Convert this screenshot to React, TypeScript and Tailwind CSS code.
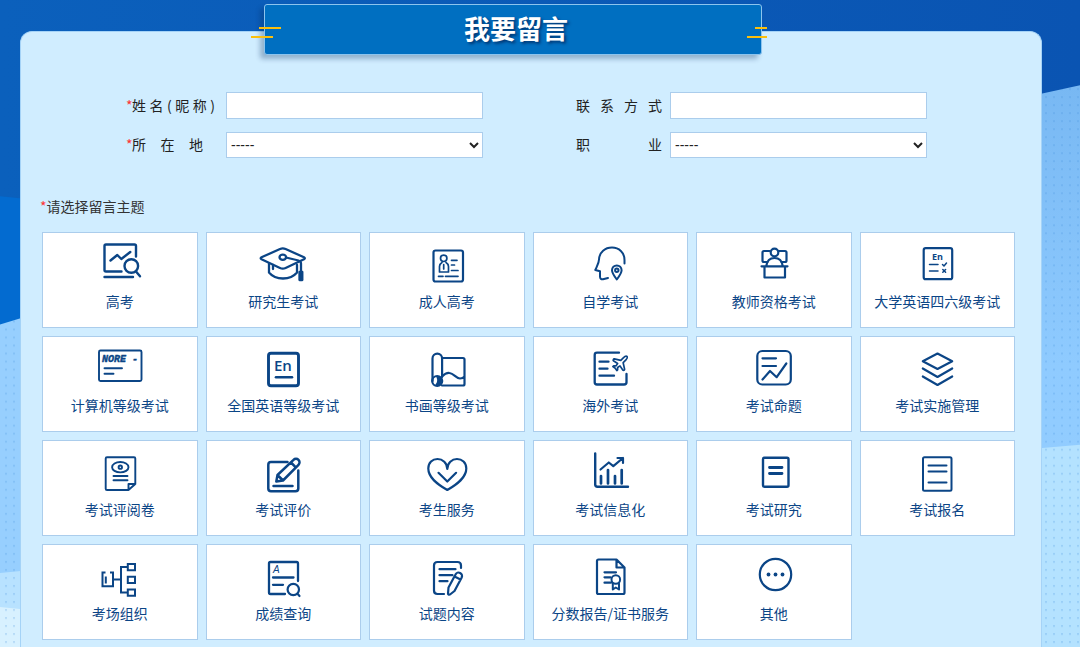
import React, { useState } from 'react';
import { Plane } from 'lucide-react';

type Topic = { label: string; icon: React.ReactNode };

const topics: Topic[] = [
  {
    label: '高考',
    icon: (
      <g strokeWidth="2.4">
        <path d="M40 16.5V6a1.5 1.5 0 0 0-1.5-1.5H10A1.5 1.5 0 0 0 8.500 6v24a1.5 1.5 0 0 0 1.5 1.5h15.5" />
        <path d="M8.500 37H37M14.500 20.500l6.800-5.500 4 4 9-7" />
        <circle cx="35.3" cy="26" r="6.800" />
        <path d="M40 31.500l4 4.800" />
      </g>
    ),
  },
  {
    label: '研究生考试',
    icon: (
      <g strokeWidth="2.3">
        <path d="M2.500 17.300 21 9q2.800-1.300 5.600 0L45 17.300q1.700 1 0 2L26.600 28q-2.800 1.300-5.600 0L2.500 19.300q-1.700-1 0-2Z" />
        <path d="M10 23.500V32.500q5 6 14 6t14-6V25M14 25v4" />
        <ellipse cx="23.800" cy="17.300" rx="3.300" ry="2.600" />
        <path d="M27 17.500 39.500 20.500q2.500.8 2.500 3V31" />
        <path d="M40.500 32h2.800v8h-2.800Z" fill="currentColor" />
      </g>
    ),
  },
  {
    label: '成人高考',
    icon: (
      <>
        <rect x="10.500" y="10.500" width="29.500" height="31" rx="2" />
        <g strokeWidth="1.700">
          <circle cx="20.700" cy="18.300" r="3.200" />
          <path d="M19 22.500q-2.500 1.500-2.500 4V32h9v-5.500q0-2.500-2.500-4M20.700 24.500v4.500M28.500 20.300H34M28.500 25H31.500M28.500 30.500H35M15.500 36.300H20M22.500 36.300H35" />
        </g>
      </>
    ),
  },
  {
    label: '自学考试',
    icon: (
      <g strokeWidth="2">
        <path d="M38.500 23.500V20C38.500 12.500 33 7.500 26 7.500C19 7.500 13.500 12 13 19.500C13 23 11 26 9.300 30L14 31.300V36.500Q14 39.500 17 39.300L22 38" />
        <path d="M30.800 39.500Q26 33 26 30.200a4.800 4.800 0 0 1 9.600 0Q35.600 33 30.800 39.500Z" />
        <circle cx="30.800" cy="30.200" r="1.700" />
      </g>
    ),
  },
  {
    label: '教师资格考试',
    icon: (
      <g strokeWidth="2.200">
        <path d="M19.500 11H14q-1.500 0-1.500 1.500v8q0 1.500 1.500 1.500h3.500M29 11h6q1.500 0 1.500 1.500v8q0 1.500-1.500 1.500h-3.500" />
        <circle cx="24.500" cy="12.500" r="3.800" />
        <path d="M16.300 26q1-8 8.200-8t8.200 8M11.500 26.300H37.500M14.500 26.500V37.500H35V26.500" />
      </g>
    ),
  },
  {
    label: '大学英语四六级考试',
    icon: (
      <>
        <rect x="10.700" y="8.200" width="28.500" height="31" rx="2" />
        <text x="19" y="19.500" className="font-['Open_Sans',sans-serif] text-[9px] font-bold" fill="currentColor" stroke="none">En</text>
        <path d="M16.500 24.500H25M16.500 31H25M29.500 24.500l1.500 1.500 2.500-3M29.800 29.500l2.800 2.800M32.600 29.500l-2.800 2.800" strokeWidth="1.500" />
      </>
    ),
  },
  {
    label: '计算机等级考试',
    icon: (
      <g strokeWidth="1.900">
        <rect x="3" y="6.500" width="42.500" height="30.500" rx="1.500" />
        <text x="6" y="17.500" className="font-['Liberation_Mono',monospace] text-[10px] font-bold italic" fill="currentColor" stroke="currentColor" strokeWidth="0.4" xmlSpace="preserve">NORE -</text>
        <path d="M8.500 24.300H26M8.500 29.700H17.500" />
      </g>
    ),
  },
  {
    label: '全国英语等级考试',
    icon: (
      <g strokeWidth="2.900">
        <rect x="9.500" y="9.300" width="30" height="32.500" rx="2.500" />
        <text x="15" y="27" className="font-['Open_Sans',sans-serif] text-[15px] font-semibold" fill="currentColor" stroke="none">En</text>
        <path d="M17 33.300H33" strokeWidth="2.600" />
      </g>
    ),
  },
  {
    label: '书画等级考试',
    icon: (
      <>
        <path d="M9.500 37V14.500a4.800 4.800 0 0 1 9.600 0V33" />
        <circle cx="14.200" cy="37" r="5" />
        <path d="M14.500 33a4 4 0 1 1-1 8q3-4 1-8Z" fill="currentColor" />
        <path d="M19.500 14H40q1.500 0 1.500 1.500V40q0 1.500-1.500 1.500H19M19 32.500Q23 28.500 26.500 29C31 29.500 33 34.500 37 34.500Q40 34.500 41.500 32.500" />
      </>
    ),
  },
  {
    label: '海外考试',
    icon: (
      <>
        <path d="M33 8.700H11Q8.700 8.700 8.700 11V38.200Q8.700 40.500 11 40.500H38Q40.500 40.500 40.500 38.200V30M13.500 17.700H22.500M13.500 24.700H21.500M13.500 31.700H28" strokeWidth="2.300" />
        <Plane x="24.500" y="10" width="19" height="19" strokeWidth={2.1} />
      </>
    ),
  },
  {
    label: '考试命题',
    icon: (
      <>
        <rect x="7.300" y="7" width="33.500" height="33.500" rx="5" />
        <path d="M12.500 14.300H26M12.500 22H26M12.500 35.500 20 27l6.700 6.200L36.300 19.500" />
      </>
    ),
  },
  {
    label: '考试实施管理',
    icon: <path d="M9.800 17.300 24.500 9.500l14.700 7.800L24.500 25ZM9.800 24.500 24.500 33l14.700-8.500M9.800 32.500 24.500 41l14.700-8.500" />,
  },
  {
    label: '考试评阅卷',
    icon: (
      <g strokeWidth="1.900">
        <path d="M32.500 42H11Q9.700 42 9.700 40.700V10.500Q9.700 9.200 11 9.200H38Q39.300 9.200 39.300 10.500V36ZM32.500 42V36H39.300" />
        <ellipse cx="24.300" cy="19.200" rx="8.200" ry="5.200" />
        <circle cx="24.300" cy="19.200" r="1.700" />
        <path d="M17.500 28H31.500M17.500 32.300H31.500" />
      </g>
    ),
  },
  {
    label: '考试评价',
    icon: (
      <g strokeWidth="2.500">
        <path d="M28.500 14H12Q9.300 14 9.300 16.700V40.500Q9.300 43.200 12 43.200H36.500Q39.300 43.200 39.300 40.500V22.500M14.500 38H33.500" />
        <path d="M17.300 33.500 18.500 27 34.500 11.800a3.500 3.500 0 0 1 5 5L24 32.500ZM18.500 27l5 5M32 14.500l4.800 4.800" />
      </g>
    ),
  },
  {
    label: '考生服务',
    icon: (
      <path d="M24.300 42C14 36 5.300 29.500 5.300 20.500C5.300 14.500 9.500 11 14.500 11C19.500 11 24.300 15 24.300 21C24.300 15 29 11 34 11C39 11 43.300 14.500 43.300 20.500C43.300 29.500 34.500 36 24.300 42ZM15.500 24.800l8.800 8.700 8.800-8.700" />
    ),
  },
  {
    label: '考试信息化',
    icon: (
      <>
        <path d="M9.200 5.500V36.500Q9.200 38.700 11.500 38.700H42" strokeWidth="2.400" />
        <path d="M15 28v7.500M22 22v13.500M29 28v7.500M35.700 22v13.500" strokeWidth="2.700" />
        <path d="M14.500 21.500 22.800 14.500l4.500 3.700L37 10M31.500 10H37V15" />
      </>
    ),
  },
  {
    label: '考试研究',
    icon: (
      <>
        <rect x="13" y="9.700" width="25.500" height="29" rx="1.500" strokeWidth="2.400" />
        <path d="M19.500 19.500H32M19.500 25.500H32" strokeWidth="2.800" />
      </>
    ),
  },
  {
    label: '考试报名',
    icon: (
      <>
        <rect x="10" y="9.300" width="28.500" height="33.500" rx="1.500" strokeWidth="2" />
        <path d="M15.500 17.500H33.500M15.500 23.500H33.500M15.500 34.500H33.500" strokeWidth="2" />
      </>
    ),
  },
  {
    label: '考场组织',
    icon: (
      <g strokeWidth="2" strokeLinecap="butt" strokeLinejoin="miter">
        <path d="M9.500 20.500H6.500V34.300H17V20.500H14M9.800 24.500V31.500M17 27.500H25M31.500 15H25V40.500H31.500" />
        <path d="M31.800 12H39v6.300H31.800ZM31.800 24.700H39V31H31.800ZM31.800 37.500H39V43.800H31.800Z" />
      </g>
    ),
  },
  {
    label: '成绩查询',
    icon: (
      <>
        <path d="M39 29V11.500Q39 10 37.500 10H11.500Q10 10 10 11.500V40.500Q10 42 11.500 42H26M14 25.500H34.500M14 32.800H24" strokeWidth="2.300" />
        <text x="14" y="21" className="font-['Liberation_Sans',sans-serif] text-[10px] italic" fill="currentColor" stroke="none">A</text>
        <circle cx="34.300" cy="37.500" r="5.700" />
        <path d="M38.500 41.800 40.500 44" />
      </>
    ),
  },
  {
    label: '试题内容',
    icon: (
      <>
        <path d="M38 16V13.500Q38 10 34.500 10H14.500Q11 10 11 13.500V38.500Q11 42 14.500 42H21M16.500 17.200H32.500M16.500 23.200H29.500M16.500 29.200H24.500" />
        <path d="M25 41.500 25.500 35.500 32.500 22.500a3.400 3.400 0 0 1 6.200 3L31.500 39 27 42.500Q25 43 25 41.500ZM31.500 24.500l6 3" />
      </>
    ),
  },
  {
    label: '分数报告/证书服务',
    icon: (
      <>
        <path d="M30.500 7.500H12.500Q11 7.500 11 9V40.500Q11 42 12.500 42H37Q38.500 42 38.500 40.500V15.500ZM30.500 7.500V15.500H38.500M18.500 20.300H30M18.500 25.300H24.500M18.500 30.700H25" />
        <g strokeWidth="2">
          <circle cx="29.800" cy="27.500" r="4.300" />
          <path d="M26.800 31.500V37.500L29.800 35.500 33 37.500V31.500" />
        </g>
      </>
    ),
  },
  {
    label: '其他',
    icon: (
      <>
        <circle cx="25.500" cy="22.500" r="15.700" />
        <g fill="currentColor" stroke="none">
          <circle cx="18.500" cy="22.500" r="1.900" />
          <circle cx="25.500" cy="22.500" r="1.900" />
          <circle cx="32.500" cy="22.500" r="1.900" />
        </g>
      </>
    ),
  },
];

const Backdrop: React.FC = () => (
  <svg className="absolute inset-0 h-full w-full" viewBox="0 0 1080 647" preserveAspectRatio="none" aria-hidden="true">
    <defs>
      <linearGradient id="sky" x1="0" x2="1" y1="0" y2="0">
        <stop offset="0" stopColor="#0b60bc" />
        <stop offset="1" stopColor="#0a54b2" />
      </linearGradient>
      <linearGradient id="haze" x1="0" x2="0" y1="0" y2="1">
        <stop offset="0" stopColor="#78b8f3" />
        <stop offset="0.5" stopColor="#8fcbff" />
        <stop offset="1" stopColor="#99d0ff" />
      </linearGradient>
      <pattern id="dots" width="8" height="8" patternUnits="userSpaceOnUse">
        <rect x="5" y="0" width="2" height="2" fill="#3f8fdc" fillOpacity="0.22" />
      </pattern>
    </defs>
    <rect width="1080" height="647" fill="url(#sky)" />
    <path d="M0 196 540 250V647H0Z" fill="#036bd0" />
    <path d="M0 324 540 160V647H0Z" fill="#97cffe" />
    <path d="M0 572 540 520V647H0Z" fill="#b8e2ff" />
    <path d="M0 606 540 660V647H0Z" fill="#d8f1ff" />
    <path d="M540 203 1080 85V647H540Z" fill="url(#haze)" />
    <path d="M540 490 1080 444V647H540Z" fill="#b4e2ff" />
    <path d="M0 324 20 318V647H0ZM1040 94 1080 85V647H1040Z" fill="url(#dots)" />
  </svg>
);

type FieldProps = {
  id: string;
  label: string;
  labelWidth: string;
  required?: boolean;
  children: React.ReactNode;
};

const Field: React.FC<FieldProps> = ({ id, label, labelWidth, required, children }) => (
  <div className="flex items-center">
    <label htmlFor={id} className="flex w-[100px] shrink-0 pb-0.5 text-sm text-[#222]">
      <span className="w-1.5 text-[#ff3333]">{required ? '*' : ''}</span>
      <span className={`${labelWidth} whitespace-nowrap [text-align-last:justify]`}>{label}</span>
    </label>
    {children}
  </div>
);

const inputClass = 'h-[27px] min-w-0 flex-1 border border-[#abcdec] bg-white px-1 text-sm';
const selectClass =
  "h-[26px] min-w-0 flex-1 border border-[#abcdec] bg-white font-['Liberation_Sans',sans-serif] text-sm text-[#222]";

export default function App() {
  const [selected, setSelected] = useState<string | null>(null);

  return (
    <div className="relative flex min-h-screen flex-col overflow-hidden pt-1 font-['Noto_Sans_CJK_SC',sans-serif]">
      <Backdrop />

      <header className="relative z-10 ml-[24.4%] flex h-[51px] w-[46.2%] items-center justify-center rounded-[3px] border border-[#8cc4ee] bg-[#006fc1] pb-1 pl-1.5 shadow-[-4px_4px_5px_rgba(0,40,90,0.3)]">
        <h1 className="text-[26px] leading-8 font-bold text-white [text-shadow:2px_2px_3px_rgba(0,30,80,0.7)]">我要留言</h1>
        <span className="absolute top-[22px] -left-1.5 h-0.5 w-[22px] bg-[#fbbf0c]" />
        <span className="absolute top-[31px] -left-3.5 h-0.5 w-[22px] bg-[#fbbf0c]" />
        <span className="absolute top-[22px] -right-1.5 h-0.5 w-3 bg-[#fbbf0c]" />
        <span className="absolute top-[31px] -right-1.5 h-0.5 w-5 bg-[#fbbf0c]" />
      </header>

      <main className="relative -mt-6 mr-[38px] ml-5 flex-1 rounded-t-xl border border-b-0 border-[#a5d3f7] bg-[#d0edff] pt-[60px] pr-[26px] pb-2 pl-[21px]">
        <form onSubmit={(e) => e.preventDefault()}>
          <div className="grid grid-cols-2 gap-x-[87px] gap-y-[13px] pr-[88px] pl-[84px]">
            <Field id="name" label="姓名(昵称)" labelWidth="w-[83px]" required>
              <input id="name" type="text" className={inputClass} />
            </Field>
            <Field id="contact" label="联系方式" labelWidth="w-[86px]">
              <input id="contact" type="text" className={inputClass} />
            </Field>
            <Field id="region" label="所在地" labelWidth="w-[71px]" required>
              <select id="region" className={selectClass}>
                <option>-----</option>
              </select>
            </Field>
            <Field id="job" label="职业" labelWidth="w-[86px]">
              <select id="job" className={selectClass}>
                <option>-----</option>
              </select>
            </Field>
          </div>

          <h2 className="-ml-0.5 mt-[38px] text-sm leading-5 text-[#333]">
            <span className="text-[#ff3333]">*</span>请选择留言主题
          </h2>

          <div className="mt-4 grid grid-cols-6 gap-2">
            {topics.map(({ label, icon }) => (
              <button
                key={label}
                type="button"
                aria-pressed={selected === label}
                onClick={() => setSelected(label)}
                className="flex h-24 flex-col items-center border border-[#abcdec] bg-white pt-[7px] text-[#0b4586]"
              >
                <svg
                  className="h-11 w-12 shrink-0 overflow-visible"
                  viewBox="0 0 48 44"
                  fill="none"
                  stroke="currentColor"
                  strokeWidth="2.2"
                  strokeLinecap="round"
                  strokeLinejoin="round"
                  aria-hidden="true"
                >
                  {icon}
                </svg>
                <span className="mt-[7px] text-sm leading-5 whitespace-nowrap">{label}</span>
              </button>
            ))}
          </div>
        </form>
      </main>
    </div>
  );
}
